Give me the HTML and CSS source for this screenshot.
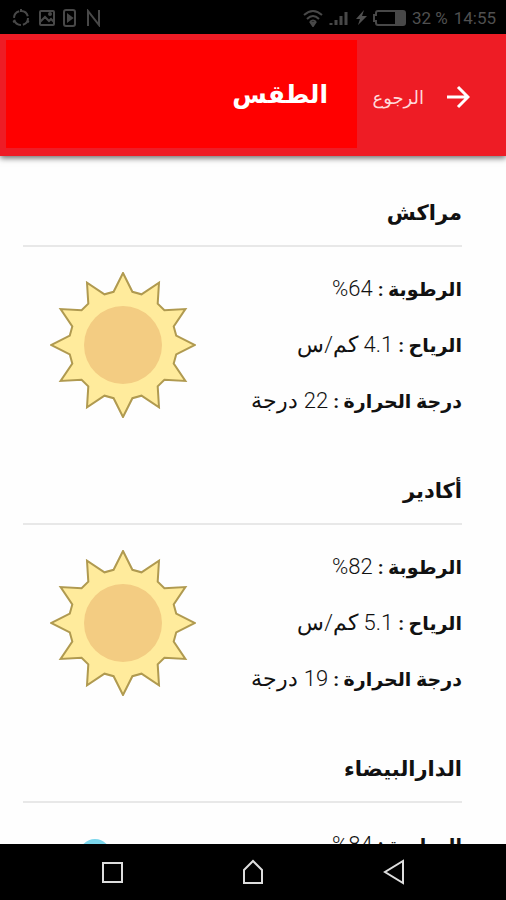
FILE: index.html
```html
<!DOCTYPE html>
<html lang="ar" dir="rtl">
<head>
    <meta charset="UTF-8">
    <meta name="viewport" content="width=device-width, initial-scale=1.0">
    <title>الطقس</title>
    <link rel="stylesheet" href="styles.css">
</head>

<body>
    <svg width="0" height="0" class="defs">
        <symbol id="sun" viewBox="-73 -73 146 146">
            <path class="rays" d="M0-72 9.4-53.2 18.5-50.7 36-62.4 34.7-41.4 41.4-34.7 62.4-36 50.7-18.5 53.2-9.4 72 0 53.2 9.4 50.7 18.5 62.4 36 41.4 34.7 34.7 41.4 36 62.4 18.5 50.7 9.4 53.2 0 72-9.4 53.2-18.5 50.7-36 62.4-34.7 41.4-41.4 34.7-62.4 36-50.7 18.5-53.2 9.4-72 0-53.2-9.4-50.7-18.5-62.4-36-41.4-34.7-34.7-41.4-36-62.4-18.5-50.7-9.4-53.2Z"/>
            <circle class="core" r="39"/>
        </symbol>
    </svg>

    <div class="status-bar" dir="ltr">
        <div class="status-group">
            <svg width="20" height="20" viewBox="0 0 20 20"><circle cx="10" cy="10" r="7" stroke-dasharray="9 2"/><path d="M10 1v3M2 14l2-1M18 14l-2-1"/></svg>
            <svg width="18" height="18" viewBox="0 0 18 18"><rect x="2" y="2" width="14" height="14" rx="1"/><path d="M2 13l5-5 4 4 2-2 3 3"/><circle cx="12" cy="5" r="1"/></svg>
            <svg width="14" height="18" viewBox="0 0 14 18"><rect x="1" y="1" width="11" height="16" rx="2"/><path class="solid" d="M5 6l4 3-4 3z"/></svg>
            <svg width="18" height="18" viewBox="0 0 18 18"><path d="M4 17V2l11 14V1"/></svg>
        </div>
        <div class="status-group end">
            <svg width="20" height="18" viewBox="0 0 20 18"><path d="M1 6q9-8 18 0M4 10q6-6 12 0M7 13q3-3 6 0"/><path class="solid" d="M8 14h4l-2 3z"/></svg>
            <svg width="20" height="18" viewBox="0 0 20 18"><path d="M2 14v2M7 11v5M12 7v9M17 3v13" stroke-width="3"/></svg>
            <svg width="12" height="18" viewBox="0 0 12 18"><path class="bolt" d="M9 1L1 10h4l-2 6 9-9H7z"/></svg>
            <svg width="33" height="18" viewBox="0 0 33 18"><path d="M5 2h25q2 0 2 2v10q0 2-2 2H5q-2 0-2-2v-2H1V6h2V4q0-2 2-2z"/><path class="solid" d="M23 3h8v12h-8z"/></svg>
            <span>32 %</span>
            <span class="clock">14:55</span>
        </div>
    </div>

    <header class="header">
        <a class="back" href="#">
            <svg width="24" height="24" viewBox="0 0 24 24"><path d="M1 12h20M12 2l10 10-10 10"/></svg>
            <span>الرجوع</span>
        </a>
        <h1>الطقس</h1>
    </header>

    <main class="content">
        <section class="city">
            <h2>مراكش</h2>
            <div class="weather">
                <div class="info">
                    <p><b>الرطوبة :</b> 64%</p>
                    <p><b>الرياح :</b> 4.1 كم/س</p>
                    <p><b>درجة الحرارة :</b> 22 درجة</p>
                </div>
                <svg class="weather-icon" viewBox="0 0 146 146"><use href="#sun"/></svg>
            </div>
        </section>
        <section class="city">
            <h2>أكادير</h2>
            <div class="weather">
                <div class="info">
                    <p><b>الرطوبة :</b> 82%</p>
                    <p><b>الرياح :</b> 5.1 كم/س</p>
                    <p><b>درجة الحرارة :</b> 19 درجة</p>
                </div>
                <svg class="weather-icon" viewBox="0 0 146 146"><use href="#sun"/></svg>
            </div>
        </section>
        <section class="city">
            <h2>الدارالبيضاء</h2>
            <div class="weather">
                <div class="info">
                    <p><b>الرطوبة :</b> 84%</p>
                </div>
                <svg class="weather-icon" viewBox="0 0 146 146"><path class="cloud" d="M30 112a22 22 0 0 1-4-44 20 20 0 0 1 24-24 19 19 0 0 1 35 14 26 26 0 0 1 20 54z"/><circle class="cloud" cx="45" cy="27" r="16"/></svg>
            </div>
        </section>
    </main>

    <nav class="nav-bar" dir="ltr">
        <button aria-label="Recent"><svg width="24" height="28" viewBox="0 0 24 28"><path d="M3 5h19v19H3z"/></svg></button>
        <button aria-label="Home"><svg width="24" height="28" viewBox="0 0 24 28"><path d="M3 25V12l9-9 9 9v13z"/></svg></button>
        <button aria-label="Back"><svg width="24" height="28" viewBox="0 0 24 28"><path d="M21 3v22L3 14z"/></svg></button>
    </nav>
</body>
</html>
```
FILE: styles.css
```css
* {
    box-sizing: border-box;
}

body {
    margin: 0;
    height: 100vh;
    display: flex;
    flex-direction: column;
    overflow: hidden;
    background: #fefefe;
    color: #111;
    font-family: Roboto, "DejaVu Sans", sans-serif;
}

svg {
    fill: none;
    flex: none;
}

.defs {
    position: absolute;
}

/* Phone status bar */
.status-bar {
    flex: none;
    height: 34px;
    padding: 2px 10px 0 11px;
    display: flex;
    justify-content: space-between;
    align-items: center;
    background: #000;
    color: #505050;
    font-size: 17px;
}

.status-bar svg {
    stroke: #484848;
    stroke-width: 2;
}

.status-bar .solid {
    fill: #484848;
}

.status-bar .bolt {
    fill: #505050;
    stroke: none;
}

.status-group {
    display: flex;
    align-items: center;
    gap: 7px;
}

.status-group.end {
    gap: 6px;
}

/* Header */
.header {
    flex: none;
    height: 122px;
    padding: 6px 6px 8px;
    display: flex;
    background: #ee1c25;
    color: #fff;
    box-shadow: 0 2px 6px rgba(0, 0, 0, 0.6);
    z-index: 1;
}

.back {
    width: 143px;
    padding: 6px 30px 0 0;
    display: flex;
    align-items: center;
    gap: 22px;
    color: #ffd9da;
    font-size: 18px;
    text-decoration: none;
}

.back svg {
    stroke: #fff;
    stroke-width: 3;
}

.header h1 {
    flex: 1;
    margin: 0;
    padding: 2px 29px 0 0;
    background: #f00;
    font-size: 25px;
    line-height: 106px;
}

/* Cities */
.content {
    flex: 1;
    min-height: 0;
    overflow: hidden;
    padding: 25px 44px 0 23px;
}

.city {
    margin-bottom: 30px;
}

.city h2 {
    margin: 0 0 14px;
    border-bottom: 2px solid #e8e8e8;
    font-size: 21px;
    line-height: 64px;
}

.weather {
    display: flex;
    justify-content: space-between;
    align-items: flex-start;
}

.info p {
    margin: 0;
    font-size: 22px;
    font-weight: 300;
    line-height: 56px;
    white-space: nowrap;
}

.info b {
    font-size: 19px;
    font-weight: 700;
    line-height: 1;
}

.weather-icon {
    width: 146px;
    height: 146px;
    margin: 11px 0 0 27px;
}

.rays {
    fill: #ffeb9c;
    stroke: #b09a50;
    stroke-width: 2;
}

.core {
    fill: #f3cc82;
}

.cloud {
    fill: #7bd6ec;
}

/* Phone navigation bar */
.nav-bar {
    flex: none;
    height: 56px;
    padding: 0 42px;
    display: flex;
    justify-content: space-around;
    align-items: center;
    background: #000;
}

.nav-bar button {
    padding: 0;
    border: none;
    background: none;
    display: flex;
}

.nav-bar svg {
    stroke: #ddd;
    stroke-width: 2;
}
```
